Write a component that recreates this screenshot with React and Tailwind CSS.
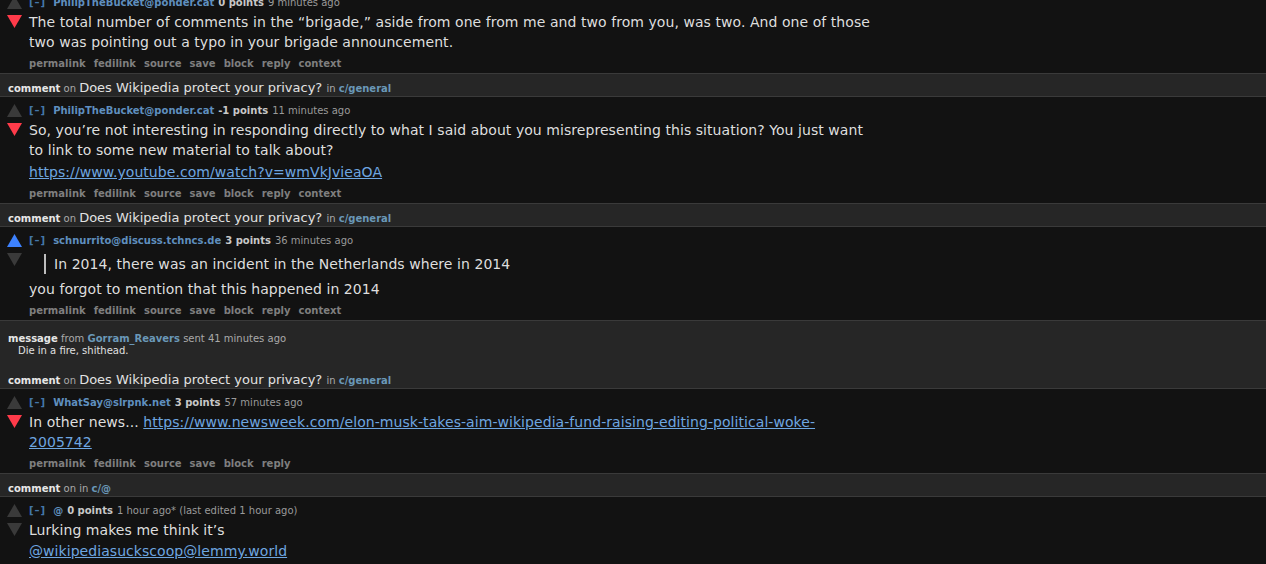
import React from 'react';

const Arrow = ({ dir, color }) => (
  <svg width="15" height="13" viewBox="0 0 15 13" className="block">
    {dir === 'up' ? (
      <polygon points="7.5,0 15,13 0,13" fill={color} />
    ) : (
      <polygon points="0,0 15,0 7.5,13" fill={color} />
    )}
  </svg>
);

const Actions = ({ items }) => (
  <div className='mt-[5px] h-[14px] leading-[14px] text-[10px] font-bold text-[#7f7f7f] flex gap-[8px]'>
    {items.map((a) => (
      <span key={a}>{a}</span>
    ))}
  </div>
);

const allActions = ['permalink', 'fedilink', 'source', 'save', 'block', 'reply', 'context'];

const Comment = ({ author, points, time, vote, extra, children, actions = allActions, first }) => {
  const up = vote === 'up' ? '#3d82ff' : '#3a3a3a';
  const down = vote === 'down' ? '#ff3b4a' : '#3a3a3a';

  return (
    <div className={`bg-[#121212] flex pt-[6px] pb-[2px] ${first ? '-mt-[11px]' : ''}`}>

      {/* Vote arrows */}
      <div className='w-[29px] shrink-0 pl-[7px] pt-[1px] flex flex-col gap-[6px]'>
        <Arrow dir="up" color={up} />
        <Arrow dir="down" color={down} />
      </div>

      {/* Body */}
      <div className='flex-1'>
        <div className='h-[15px] leading-[15px] text-[10px] text-[#9a9a9a] whitespace-nowrap'>
          <span className='text-[#4477aa] font-bold tracking-[1px] mr-[7px]'>[–]</span>
          {author && <span className='text-[#5f8fbf] font-bold mr-[4px]'>{author}</span>}
          <span className='text-[#c8c8c8] font-bold mr-[4px]'>{points}</span>
          <span>{time}</span>
          {extra && <span> {extra}</span>}
        </div>
        <div className='mt-[2px] max-w-[845px] text-[14px] leading-[20px] tracking-[0.06px] text-[#dedede]'>
          {children}
        </div>
        {actions && <Actions items={actions} />}
      </div>
    </div>
  );
};

const Header = ({ title, community, noBorder }) => (
  <div className={`bg-[#262626] border-b border-[#3a3a3a] pl-[8px] pt-[5px] leading-[16px] whitespace-nowrap overflow-hidden ${noBorder ? 'h-[23px]' : 'h-[24px] border-t'}`}>
    <span className='text-[10px] font-bold text-[#e6e6e6]'>comment</span>
    <span className='text-[10px] text-[#aaaaaa]'> on </span>
    {title && <span className='text-[13px] text-[#e2e2e2]'>{title} </span>}
    <span className='text-[10px] text-[#aaaaaa]'>in </span>
    <span className='text-[10px] font-bold text-[#6a98b8]'>{community}</span>
  </div>
);

const link = 'text-[#6ea6e0] underline';

const App = () => {
  return (
    <div className='w-[1266px] h-[564px] overflow-hidden bg-[#121212]' style={{ fontFamily: '"DejaVu Sans", Verdana, sans-serif' }}>

      <Comment first author="PhilipTheBucket@ponder.cat" points="0 points" time="9 minutes ago" vote="down">
        <p>The total number of comments in the “brigade,” aside from one from me and two from you, was two. And one of those two was pointing out a typo in your brigade announcement.</p>
      </Comment>

      <Header title="Does Wikipedia protect your privacy?" community="c/general" />

      <Comment author="PhilipTheBucket@ponder.cat" points="-1 points" time="11 minutes ago" vote="down">
        <p>So, you’re not interesting in responding directly to what I said about you misrepresenting this situation? You just want to link to some new material to talk about?</p>
        <p className='mt-[2px]'><span className={link}>https://www.youtube.com/watch?v=wmVkJvieaOA</span></p>
      </Comment>

      <Header title="Does Wikipedia protect your privacy?" community="c/general" />

      <Comment author="schnurrito@discuss.tchncs.de" points="3 points" time="36 minutes ago" vote="up">
        <blockquote className='mt-[6px] ml-[15px] pl-[8px] border-l-2 border-[#bdbdbd]'>
          In 2014, there was an incident in the Netherlands where in 2014
        </blockquote>
        <p className='mt-[5px]'>you forgot to mention that this happened in 2014</p>
      </Comment>

      {/* Private message */}
      <div className='bg-[#262626] border-t border-[#3a3a3a] pl-[8px] pt-[12px] pb-[9px] leading-[12px]'>
        <div className='text-[10px] whitespace-nowrap'>
          <span className='font-bold text-[#e6e6e6]'>message</span>
          <span className='text-[#aaaaaa]'> from </span>
          <span className='font-bold text-[#6a98b8]'>Gorram_Reavers</span>
          <span className='text-[#aaaaaa]'> sent 41 minutes ago</span>
        </div>
        <div className='pl-[10px] text-[10px] text-[#e0e0e0]'>Die in a fire, shithead.</div>
      </div>

      <Header noBorder title="Does Wikipedia protect your privacy?" community="c/general" />

      <Comment author="WhatSay@slrpnk.net" points="3 points" time="57 minutes ago" vote="down" actions={['permalink', 'fedilink', 'source', 'save', 'block', 'reply']}>
        <p>In other news... <span className={link}>https://www.newsweek.com/elon-musk-takes-aim-wikipedia-fund-raising-editing-political-woke-2005742</span></p>
      </Comment>

      <Header community="c/@" />

      <Comment author="@" points="0 points" time="1 hour ago*" extra="(last edited 1 hour ago)">
        <p>Lurking makes me think it’s</p>
        <p className='mt-[1px]'><span className={link}>@wikipediasuckscoop@lemmy.world</span></p>
      </Comment>
    </div>
  );
};

export default App;
